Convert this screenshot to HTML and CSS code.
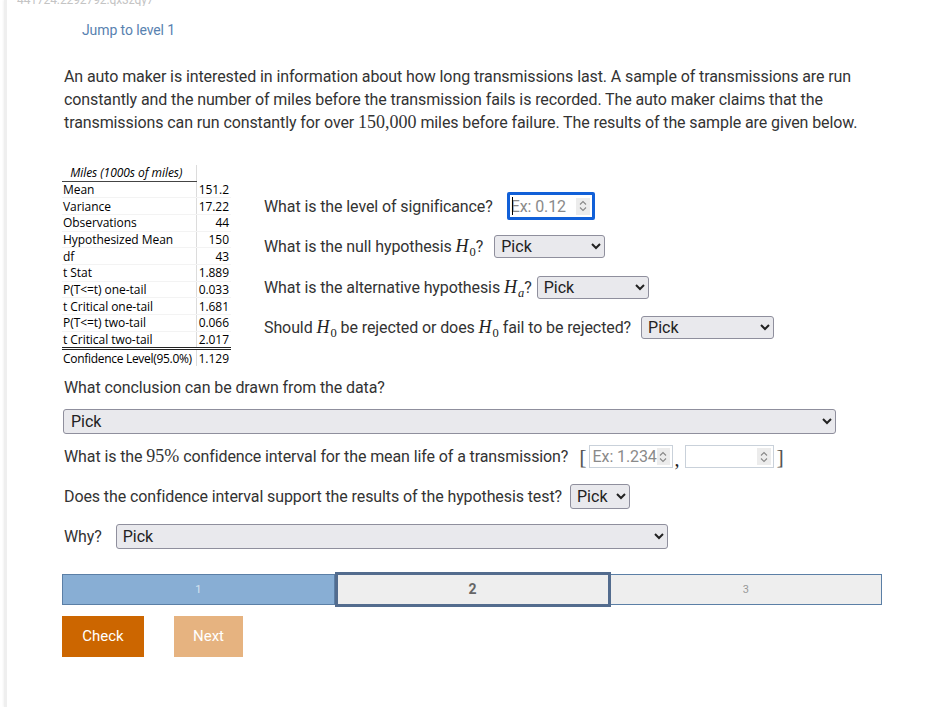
FILE: index.html
```html
<!DOCTYPE html>
<html>
<head>
<meta charset="utf-8">
<link rel="stylesheet" href="styles.css">
</head>
<body>
<div class="page">
  <div class="qid">441724.2292792.qx3zqy7</div>
  <div class="jump">Jump to level 1</div>
  <p class="intro">An auto maker is interested in information about how long transmissions last. A sample of transmissions are run constantly and the number of miles before the transmission fails is recorded. The auto maker claims that the transmissions can run constantly for over <span class="num">150,000</span> miles before failure. The results of the sample are given below.</p>

  <div class="split">
    <table class="stats">
      <colgroup><col class="c1"><col class="c2"></colgroup>
      <tr class="head"><td class="h">Miles (1000s of miles)</td><td class="v"></td></tr>
      <tr><td>Mean</td><td class="v">151.2</td></tr>
      <tr><td>Variance</td><td class="v">17.22</td></tr>
      <tr><td>Observations</td><td class="v">44</td></tr>
      <tr><td>Hypothesized Mean</td><td class="v">150</td></tr>
      <tr><td>df</td><td class="v">43</td></tr>
      <tr><td>t Stat</td><td class="v">1.889</td></tr>
      <tr><td>P(T&lt;=t) one-tail</td><td class="v">0.033</td></tr>
      <tr><td>t Critical one-tail</td><td class="v">1.681</td></tr>
      <tr><td>P(T&lt;=t) two-tail</td><td class="v">0.066</td></tr>
      <tr><td>t Critical two-tail</td><td class="v">2.017</td></tr>
      <tr class="conf"><td>Confidence Level(95.0%)</td><td class="v">1.129</td></tr>
    </table>

    <div class="questions">
      <div class="qrow">
        <span>What is the level of significance?</span>
        <span class="numbox focused w88"><span class="ph">Ex: 0.12</span><span class="caret"></span><span class="spin"><svg width="10" height="14" viewBox="0 0 10 14"><path d="M2 5.5 L5 2.5 L8 5.5 M2 8.5 L5 11.5 L8 8.5" fill="none" stroke="#888" stroke-width="1.1"/></svg></span></span>
      </div>
      <div class="qrow">
        <span>What is the null hypothesis <span class="m"><i>H</i><sub>0</sub></span>?</span>
        <select class="pick w110 ml11"><option>Pick</option></select>
      </div>
      <div class="qrow">
        <span>What is the alternative hypothesis <span class="m"><i>H</i><sub><i>a</i></sub></span>?</span>
        <select class="pick w111 ml5"><option>Pick</option></select>
      </div>
      <div class="qrow">
        <span>Should <span class="m"><i>H</i><sub>0</sub></span> be rejected or does <span class="m"><i>H</i><sub>0</sub></span> fail to be rejected?</span>
        <select class="pick w132 ml10"><option>Pick</option></select>
      </div>
    </div>
  </div>

  <div class="line l1">What conclusion can be drawn from the data?</div>
  <select class="pick wide"><option>Pick</option></select>

  <div class="line ci">
    <span>What is the <span class="num">95%</span> confidence interval for the mean life of a transmission?</span>
    <span class="br open">[</span>
    <span class="numbox w84"><span class="ph">Ex: 1.234</span><span class="spin"><svg width="10" height="14" viewBox="0 0 10 14"><path d="M2 5.5 L5 2.5 L8 5.5 M2 8.5 L5 11.5 L8 8.5" fill="none" stroke="#888" stroke-width="1.1"/></svg></span></span>
    <span class="comma">,</span>
    <span class="numbox w89"><span class="ph"></span><span class="spin"><svg width="10" height="14" viewBox="0 0 10 14"><path d="M2 5.5 L5 2.5 L8 5.5 M2 8.5 L5 11.5 L8 8.5" fill="none" stroke="#888" stroke-width="1.1"/></svg></span></span>
    <span class="br close">]</span>
  </div>

  <div class="line does">
    <span>Does the confidence interval support the results of the hypothesis test?</span>
    <select class="pick w60 ml8"><option>Pick</option></select>
  </div>

  <div class="line why">
    <span>Why?</span>
    <select class="pick w551 ml14"><option>Pick</option></select>
  </div>

  <div class="progress">
    <div class="seg done">1</div>
    <div class="seg current">2</div>
    <div class="seg todo">3</div>
  </div>

  <div class="buttons">
    <button class="btn check">Check</button>
    <button class="btn next">Next</button>
  </div>
</div>
</body>
</html>
```

FILE: styles.css
```css
html, body {
  margin: 0;
  padding: 0;
  background: #fff;
}
body {
  font-family: Roboto, "Liberation Sans", sans-serif;
  font-size: 16px;
  letter-spacing: -0.1px;
  color: #333;
  overflow: hidden;
}
.page {
  margin-left: 4px;
  border-left: 3px solid #efefef;
  box-shadow: -1px 0 2px #f4f4f4;
  min-height: 707px;
  padding-left: 55px;
  box-sizing: border-box;
  width: 880px;
}
.qid {
  height: 6px;
  overflow: hidden;
  font-size: 12px;
  line-height: 0px;
  color: #c4c4c4;
  margin-left: -45px;
}
.jump {
  margin-top: 14px;
  margin-left: 20px;
  font-size: 14px;
  line-height: 20px;
  color: #5882b0;
}
.intro {
  margin: 26px 0 0 2px;
  width: 815px;
  line-height: 22.5px;
  font-size: 16px;
  color: #333;
}
.num {
  font-family: "Liberation Serif", serif;
  font-size: 18px;
  letter-spacing: 0;
}
.m {
  font-family: "Liberation Serif", serif;
  font-size: 18px;
  white-space: nowrap;
  letter-spacing: 0;
  color: #222;
}
.m sub {
  font-size: 12.5px;
  vertical-align: -4px;
  line-height: 0;
  margin-left: 1px;
}

.split {
  display: flex;
  align-items: center;
  margin-top: 29px;
  height: 204px;
}
.stats {
  border-collapse: collapse;
  table-layout: fixed;
  font-family: "Open Sans", "Liberation Sans", sans-serif;
  font-size: 12px;
  letter-spacing: -0.05px;
  color: #000;
  width: 169px;
  flex: 0 0 169px;
  margin-left: 0;
}
.stats col.c1 { width: 134px; }
.stats col.c2 { width: 35px; }
.stats td {
  padding: 0 0 0 1px;
  height: 15.7px;
  line-height: 15px;
  border-bottom: 1px solid #f3f3f3;
  white-space: nowrap;
  vertical-align: middle;
  overflow: visible;
}
.stats td.v {
  text-align: right;
  padding-right: 2px;
  border-left: 1px solid #dcdcdc;
}
.stats tr.head td {
  height: 16px;
  border-bottom: none;
}
.stats tr.head td.h {
  font-style: italic;
  text-align: center;
  border-bottom: 1px solid #444;
  padding-right: 6px;
}
.stats tr.conf td {
  border-top: 3px double #222;
  border-bottom: none;
  height: 16px;
  letter-spacing: -0.3px;
}
.stats tr.conf td.v {
  letter-spacing: 0;
}
.questions {
  margin-left: 33px;
  margin-top: 3px;
  display: flex;
  flex-direction: column;
  gap: 12.5px;
}
.qrow {
  display: flex;
  align-items: center;
  height: 28px;
}
.pick {
  font-family: Roboto, "Liberation Sans", sans-serif;
  font-size: 16px;
  color: #222;
  background-color: #e9e9ed;
  border: 1px solid #8f8f9d;
  border-radius: 3px;
  height: 23px;
  padding: 0 2px;
  box-sizing: border-box;
}
.w60 { width: 60px; }
.w110 { width: 111px; }
.w111 { width: 112px; }
.w132 { width: 133px; }
.w551 { width: 552px; }
.ml5 { margin-left: 5px; }
.ml8 { margin-left: 8px; }
.ml10 { margin-left: 10px; }
.ml11 { margin-left: 11px; }
.ml14 { margin-left: 14px; }

.numbox {
  display: inline-flex;
  align-items: center;
  position: relative;
  box-sizing: border-box;
  height: 23px;
  border: 1px solid #c9d1da;
  background: #fff;
  padding-left: 3px;
}
.numbox.focused {
  height: 28px;
  border: 3px solid #1160d8;
  border-radius: 2px;
  margin-left: 14px;
  padding-left: 1px;
}
.w88 { width: 88px; }
.w84 { width: 84px; }
.w89 { width: 89px; }
.ph {
  flex: 1;
  color: #8a8a8a;
  font-size: 16px;
  white-space: nowrap;
}
.caret {
  position: absolute;
  left: 2px;
  top: 2px;
  width: 1px;
  height: 18px;
  background: #000;
}
.spin {
  width: 14px;
  height: 17px;
  background: #ececec;
  display: flex;
  align-items: center;
  justify-content: center;
  margin-right: 2px;
}

.line {
  display: flex;
  align-items: center;
}
.l1 {
  margin-top: 8px;
  height: 24px;
  margin-left: 2px;
}
.wide {
  display: block;
  margin-top: 9px;
  width: 773px;
  height: 25px;
  margin-left: 1px;
  padding-left: 3px;
}
.ci {
  margin-top: 11px;
  height: 24px;
  margin-left: 2px;
}
.br {
  font-family: "Liberation Serif", serif;
  font-size: 22px;
  color: #555;
  font-weight: 300;
  line-height: 20px;
}
.br.open { margin-left: 11px; margin-right: 2px; }
.br.close { margin-left: 2px; }
.comma {
  align-self: flex-end;
  font-family: "Liberation Serif", serif;
  font-size: 20px;
  color: #222;
  line-height: 20px;
  margin: 0 6px 0 2px;
}
.does {
  margin-top: 15px;
  height: 25px;
  margin-left: 2px;
}
.does .pick, .why .pick { height: 25px; }
.why {
  margin-top: 15px;
  height: 25px;
  margin-left: 2px;
}
.progress {
  display: flex;
  margin-top: 25px;
  width: 820px;
  height: 31px;
}
.seg {
  flex: 1;
  display: flex;
  align-items: center;
  justify-content: center;
  box-sizing: border-box;
  font-size: 11px;
}
.seg.done {
  background: #88aed4;
  border: 1px solid #5b7fa6;
  color: #d6e3f0;
}
.seg.current {
  background: #eeeeee;
  border: 3px solid #536c8e;
  margin: -2px 0;
  height: 35px;
  flex: 0 0 276px;
  font-weight: bold;
  font-size: 14px;
  color: #666;
}
.seg.todo {
  background: #eeeeee;
  border: 1px solid #5b7fa6;
  border-left: none;
  color: #999;
}
.buttons {
  display: flex;
  gap: 30px;
  margin-top: 11px;
}
.btn {
  border: none;
  height: 41px;
  font-family: Roboto, "Liberation Sans", sans-serif;
  font-size: 15px;
  color: #fff;
  padding: 0;
}
.check {
  width: 82px;
  background: #cc6600;
}
.next {
  width: 69px;
  background: #e6b380;
}
```
